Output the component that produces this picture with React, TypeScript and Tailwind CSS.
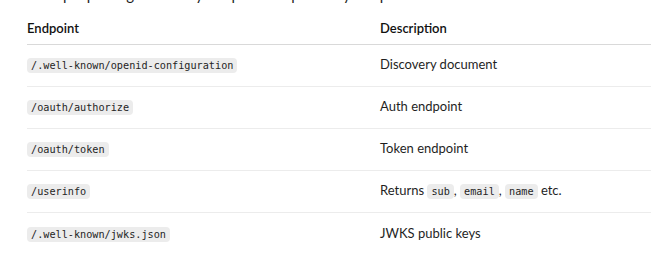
import React from "react"

const rows: { path: string; desc: React.ReactNode }[] = [
  { path: "/.well-known/openid-configuration", desc: "Discovery document" },
  { path: "/oauth/authorize", desc: "Auth endpoint" },
  { path: "/oauth/token", desc: "Token endpoint" },
  { path: "/userinfo", desc: "returns" },
  { path: "/.well-known/jwks.json", desc: "JWKS public keys" },
]

const Code = ({ children }: { children: React.ReactNode }) => (
  <code className="rounded-[4px] bg-[#ececec] px-[4px] py-[2px] font-['DejaVu_Sans_Mono',monospace] text-[10.2px] leading-[13px] text-[#1f1f1f]">
    {children}
  </code>
)

const App = () => {
  return (
    <div className="h-[276px] w-[651px] overflow-hidden bg-white pl-[27px] font-['Lato',sans-serif] text-[#1f1f1f]">
      {/* previous paragraph, cut off by the top edge */}
      <div className="h-[4px] overflow-hidden">
        <p className="-mt-[16px] whitespace-nowrap text-[15px] leading-[20px]">
          Example parsing of the key endpoints exposed by the provider:
        </p>
      </div>

      <table className="mt-[10px] w-[624px] border-collapse text-left text-[13px]">
        <thead>
          <tr className="border-b border-[#d9d9d9]">
            <th className="h-[30px] w-[353px] p-0 align-middle font-semibold text-[#111]">
              Endpoint
            </th>
            <th className="h-[30px] p-0 align-middle font-semibold text-[#111]">
              Description
            </th>
          </tr>
        </thead>
        <tbody>
          {rows.map((r, i) => (
            <tr
              key={r.path}
              className={i < rows.length - 1 ? "border-b border-[#ececec]" : ""}
            >
              <td className="h-[42px] p-0 align-middle">
                <Code>{r.path}</Code>
              </td>
              <td className="h-[42px] p-0 align-middle">
                {r.desc === "returns" ? (
                  <span>
                    Returns <Code>sub</Code>, <Code>email</Code>,{" "}
                    <Code>name</Code> etc.
                  </span>
                ) : (
                  r.desc
                )}
              </td>
            </tr>
          ))}
        </tbody>
      </table>
    </div>
  )
}

export default App
